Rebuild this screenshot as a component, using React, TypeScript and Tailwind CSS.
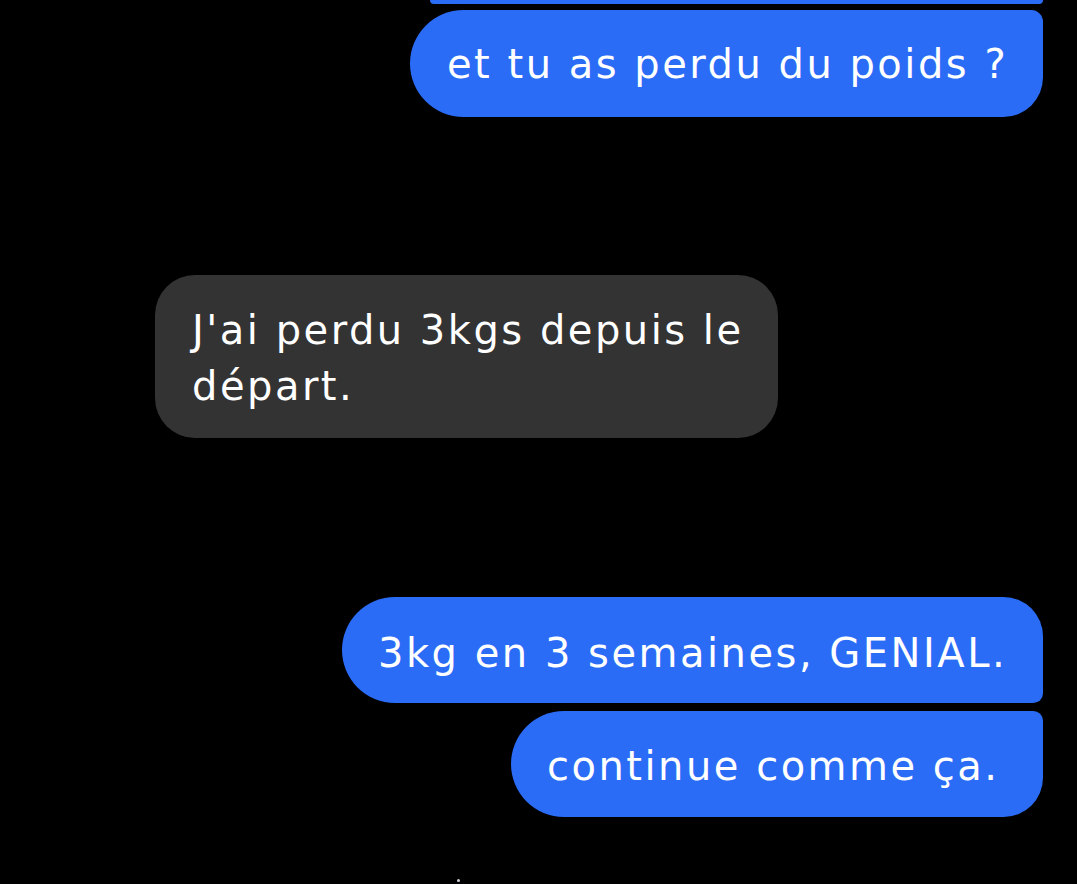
import React from 'react'

const font = { fontFamily: '"DejaVu Sans", Roboto, sans-serif' }

const App: React.FC = () => {
  return (
    <div
      className="h-[884px] w-full overflow-hidden bg-black pr-[34px] flex flex-col items-end text-white text-[40px] leading-[56px] tracking-[2.5px]"
      style={font}
    >
      {/* tail of the previous bubble */}
      <div className="w-[613px] h-[4px] bg-[#2b6cf7] rounded-b-[4px]" />

      <div className="mt-[6px] w-[633px] h-[107px] bg-[#2b6cf7] rounded-l-[54px] rounded-tr-[12px] rounded-br-[40px] pl-[37px] pt-[26px] whitespace-nowrap">
        et tu as perdu du poids ?
      </div>

      {/* received */}
      <div className="self-start ml-[155px] mt-[158px] w-[623px] h-[163px] bg-[#333333] rounded-[40px] pl-[37px] pt-[27px] whitespace-nowrap">
        J'ai perdu 3kgs depuis le
        <br />
        départ.
      </div>

      <div className="mt-[159px] w-[701px] h-[106px] bg-[#2b6cf7] rounded-l-[54px] rounded-tr-[40px] rounded-br-[10px] pl-[36px] pt-[28px] whitespace-nowrap">
        3kg en 3 semaines, GENIAL.
      </div>

      <div className="mt-[8px] w-[532px] h-[106px] bg-[#2b6cf7] rounded-l-[54px] rounded-tr-[10px] rounded-br-[40px] pl-[36px] pt-[27px] whitespace-nowrap">
        continue comme ça.
      </div>

      <div className="self-start ml-[457px] mt-[62px] w-[3px] h-[3px] rounded-full bg-gray-300" />
    </div>
  )
}

export default App
